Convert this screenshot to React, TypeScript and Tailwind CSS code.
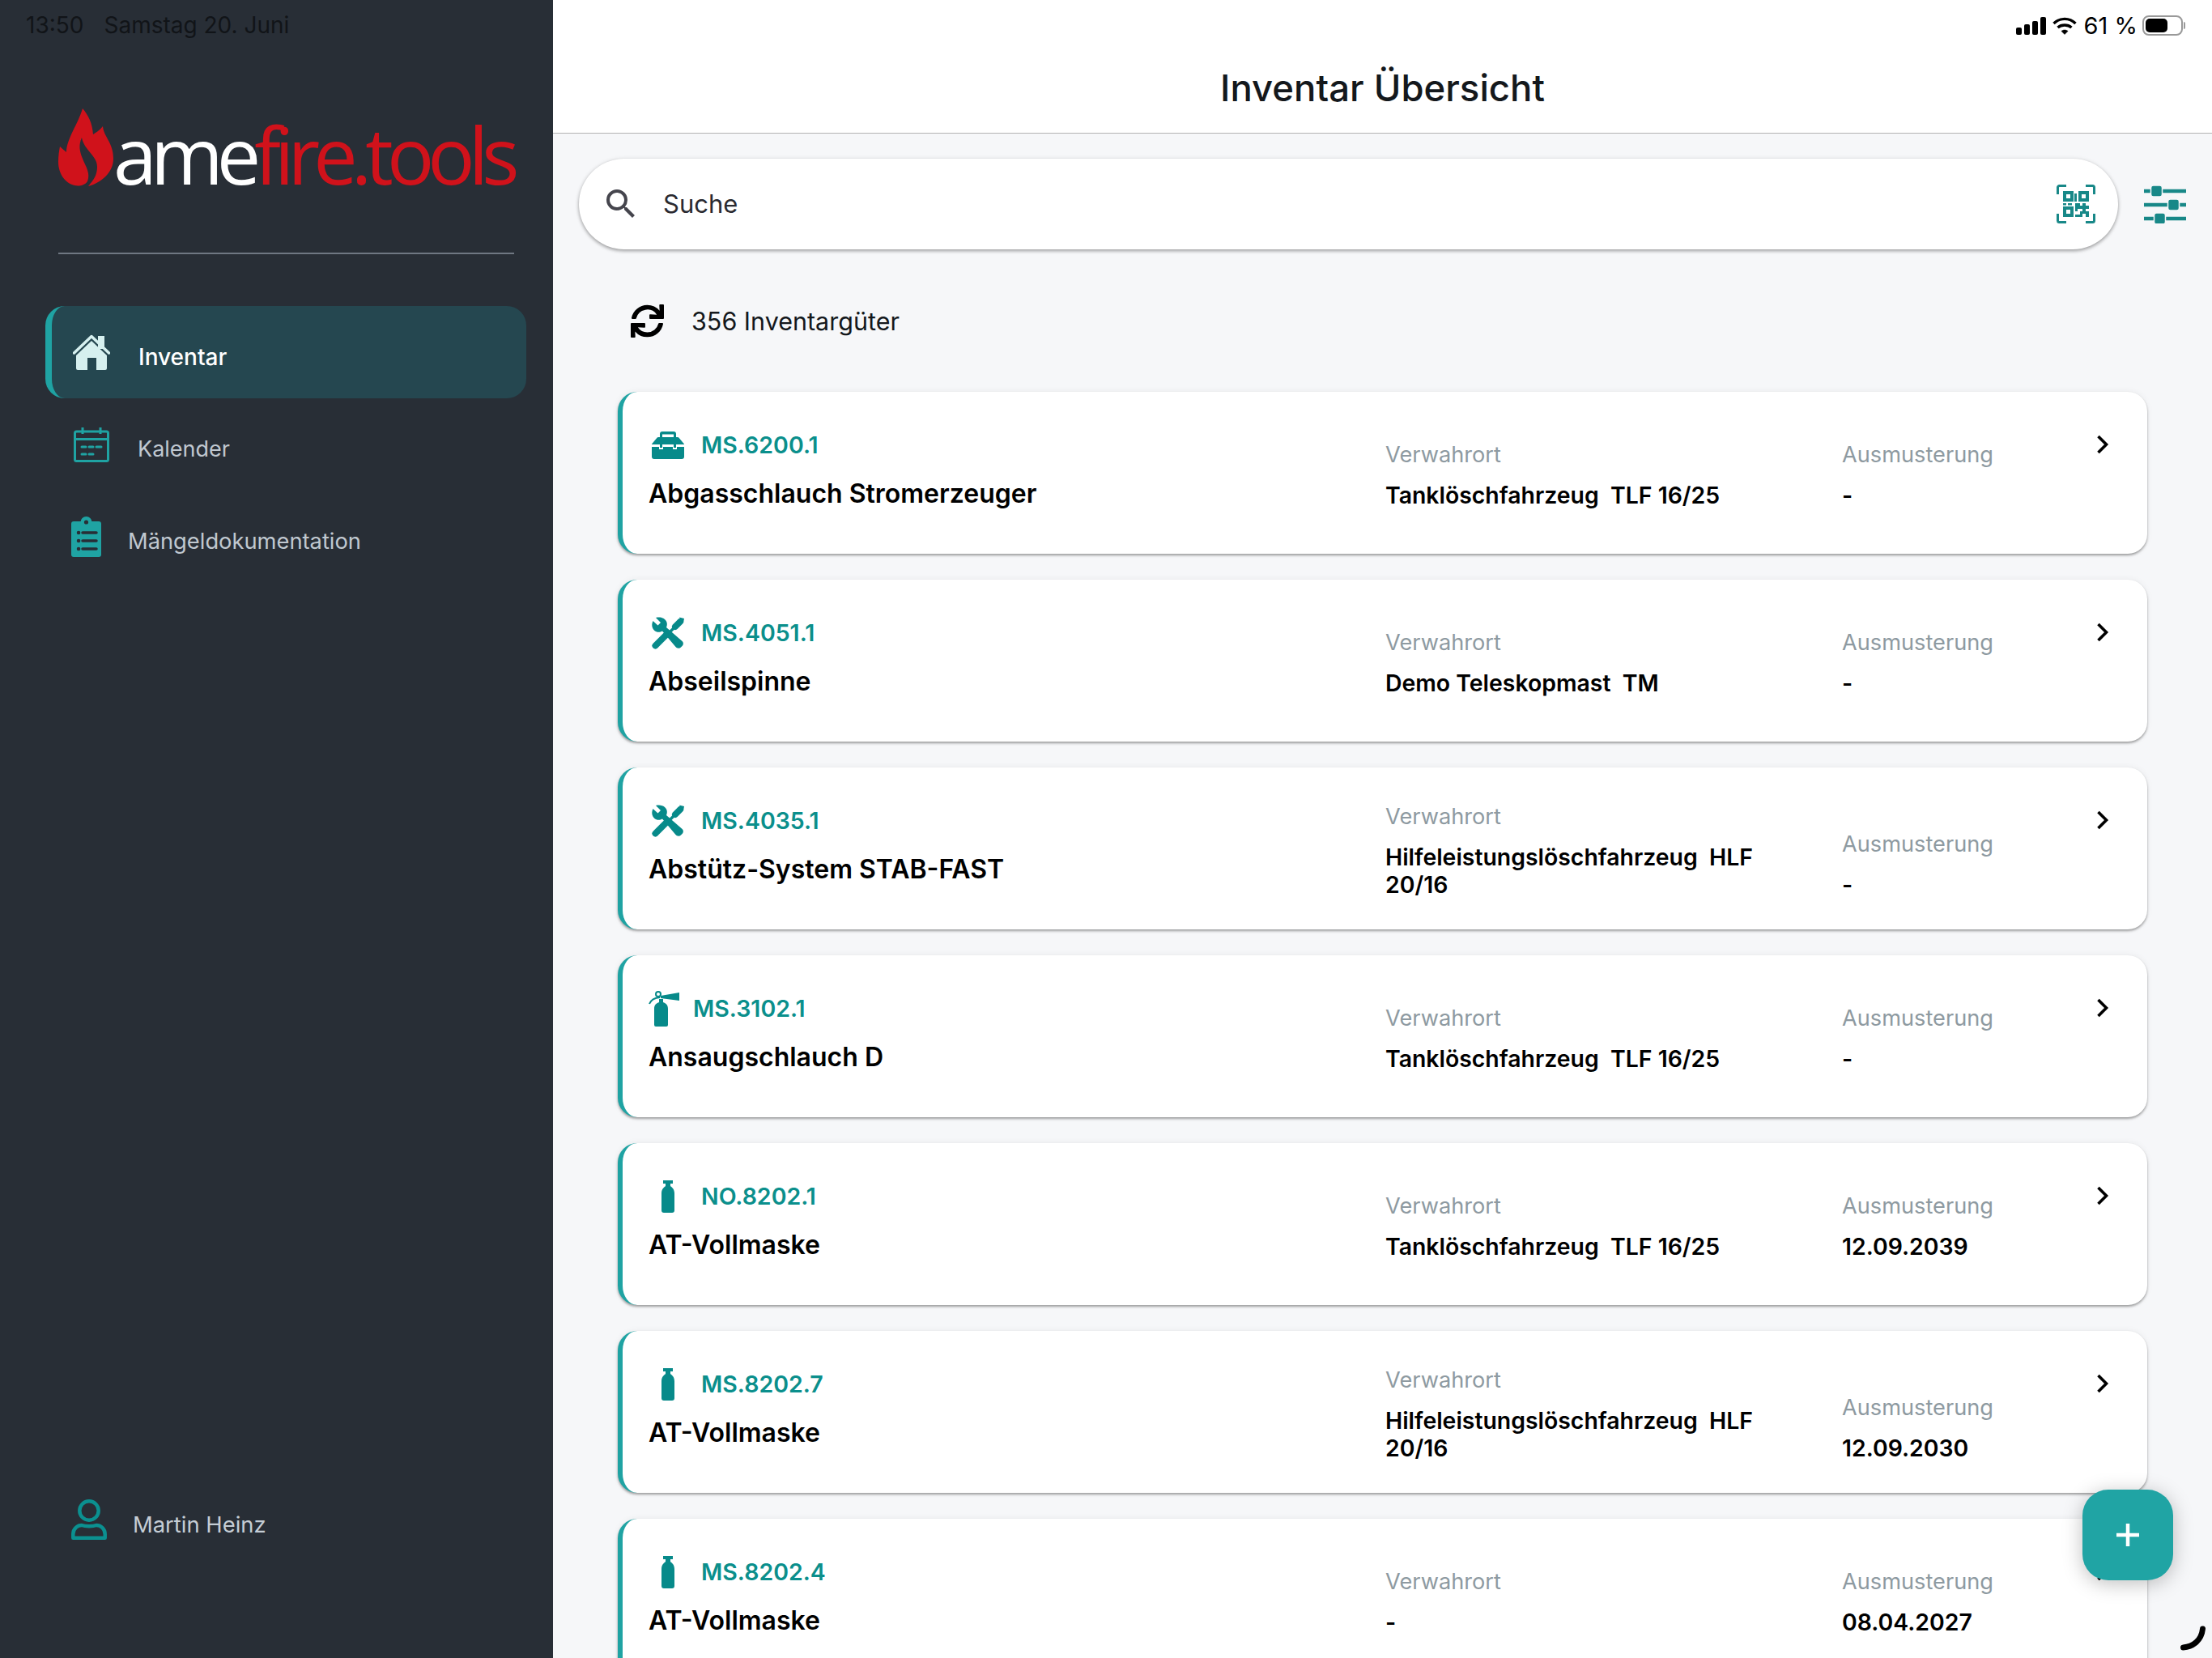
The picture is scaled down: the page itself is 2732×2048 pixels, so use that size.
import { FaSync } from "react-icons/fa";
import { MdSearch } from "react-icons/md";
import type { ReactNode } from "react";

const HomeIcon = () => (
  <svg width="46" height="44" viewBox="0 0 46 44" fill="#d6f0ef">
    <rect x="31" y="2" width="8" height="16" />
    <path d="M4 26 L23 8 L42 26 V42 a2 2 0 0 1-2 2 H29 V29 H18 V44 H6 a2 2 0 0 1-2-2Z" />
    <path d="M1.5 23 L23 2.5 L44.5 23" fill="none" stroke="#d6f0ef" strokeWidth="3.5" strokeLinejoin="round" strokeLinecap="round" />
  </svg>
);

const CalendarIcon = () => (
  <svg width="44" height="43" viewBox="0 0 44 43" fill="none" stroke="#1fa3a3">
    <rect x="1.5" y="5" width="41" height="36.5" rx="2" strokeWidth="3" />
    <path d="M2 14.5H42M11 0V8M33 0V8" strokeWidth="3" />
    <path d="M10 24H15M19 24H24M28 24H34M10 33H15M19 33H24" strokeWidth="3" strokeLinecap="round" />
  </svg>
);

const ClipboardIcon = () => (
  <svg width="37" height="50" viewBox="0 0 37 50">
    <circle cx="18.5" cy="7" r="7" fill="#1fa3a3" />
    <rect x="0" y="6" width="37" height="44" rx="3" fill="#1fa3a3" />
    <circle cx="18.5" cy="7" r="2.6" fill="#282e36" />
    <path d="M14 20H31M14 30H31M14 40H31" stroke="#282e36" strokeWidth="3.5" strokeLinecap="round" />
    <path d="M9 20h.1M9 30h.1M9 40h.1" stroke="#282e36" strokeWidth="4.5" strokeLinecap="round" />
  </svg>
);

const PersonIcon = () => (
  <svg width="44" height="50" viewBox="0 0 44 50" fill="none" stroke="#0b9090" strokeWidth="4.5" strokeLinejoin="round">
    <circle cx="22" cy="14" r="11.7" />
    <path d="M2.3 47.7 V43 C2.3 36 8 32 13 32 C17 33.5 27 33.5 31 32 C36 32 41.7 36 41.7 43 V47.7 Z" />
  </svg>
);

const Flame = () => (
  <svg width="68" height="96" viewBox="0 0 68 96" fill="#d0121b">
    <path d="M30 0 C37 8 42 18 43 32 C46 30 51 27 55 22 C56 35 68 42 68 62 C68 80 52 92 37 96 C44 88 48 82 48 72 C48 58 32 52 29 36 C25 45 26 52 30 62 C34 72 40 80 36 90 C32 96 24 96 20 95 C8 92 0 80 0 66 C0 58 1 52 2 47 C5 50 8 52 10 54 C10 38 24 20 30 0Z" />
  </svg>
);

const ToolboxIcon = () => (
  <svg width="40" height="34" viewBox="0 0 40 34" fill="#078a8a">
    <path fillRule="evenodd" d="M10 7V3a3 3 0 0 1 3-3h14a3 3 0 0 1 3 3v4h2a2 2 0 0 1 1.5.7L40 15.5V16H0v-.5L6.5 7.7A2 2 0 0 1 8 7ZM13 7h14V3.5H13Z" />
    <path d="M0 19h9v3h5v-3h12v3h5v-3h9v12a3 3 0 0 1-3 3H3a3 3 0 0 1-3-3Z" />
    <rect x="10" y="15" width="3" height="5" />
    <rect x="27" y="15" width="3" height="5" />
  </svg>
);

const ToolsIcon = () => (
  <svg width="40" height="40" viewBox="0 0 40 40" fill="#078a8a">
    <path d="M5 1 L11 7 L7.5 10.5 L1.5 5 C-1 10 0.5 15 4 17.5 C7 19.5 10.5 19 13 17.5 L29 36.5 C31 39 34 39.5 36 37.5 L38 35.5 C39.5 33.5 39 31 37 29.5 L18 13 C19.5 9.5 19 6 16.5 3.5 C13.5 0.5 9 0 5 1Z" />
    <path d="M4.5 35.5 L17 23" fill="none" stroke="#078a8a" strokeWidth="8" strokeLinecap="round" />
    <path d="M35 6 L29 12" fill="none" stroke="#078a8a" strokeWidth="8" strokeLinecap="round" />
    <path d="M29 12 L23 18" fill="none" stroke="#078a8a" strokeWidth="3.5" />
    <path d="M34 0.5 L40 2 L39 7.5 L36 4Z" />
  </svg>
);

const Extinguisher = () => (
  <svg width="38" height="44" viewBox="0 0 38 44" fill="#078a8a">
    <path d="M7 22 C7 17 10 15 13 14 V10 H18 V14 C21 15 24 17 24 22 V42 a2 2 0 0 1-2 2 H9 a2 2 0 0 1-2-2Z" />
    <path d="M15 6 L38 2 V12 L15 9Z" />
    <circle cx="12" cy="4" r="3" fill="none" stroke="#078a8a" strokeWidth="2" />
    <path d="M1 16 C3 11 7 8.5 14 8" fill="none" stroke="#078a8a" strokeWidth="2" />
  </svg>
);

const Bottle = () => (
  <svg width="16" height="40" viewBox="0 0 16 40" fill="#078a8a">
    <rect x="2" y="0" width="12" height="4" />
    <rect x="5" y="4" width="6" height="4" />
    <path d="M0 16 C0 10 4 8 5 7 H11 C12 8 16 10 16 16 V37 a3 3 0 0 1-3 3 H3 a3 3 0 0 1-3-3Z" />
  </svg>
);

const QrIcon = () => (
  <svg width="48" height="48" viewBox="0 0 48 48" fill="#188888">
    <path d="M1.5 12V3.5a2 2 0 0 1 2-2H12M36 1.5h8.5a2 2 0 0 1 2 2V12M1.5 36v8.5a2 2 0 0 0 2 2H12M46.5 36v8.5a2 2 0 0 1-2 2H36" fill="none" stroke="#188888" strokeWidth="3" />
    <path fillRule="evenodd" d="M8 8h13v13H8ZM12 12v5h5v-5Z" />
    <path fillRule="evenodd" d="M27 8h13v13H27ZM31 12v5h5v-5Z" />
    <path fillRule="evenodd" d="M8 27h13v13H8ZM12 31v5h5v-5Z" />
    <path d="M22 11h3v10h-3ZM8 23h4v2.5H8ZM14 23h5v2.5h-5ZM23 23h6v3h3v-3h4v3h4v4h-4v3h4v7h-4v-4h-4v4h-9v-3h6v-4h3v-3h-6v3h-3Z" />
  </svg>
);

const SlidersIcon = () => (
  <svg width="52" height="47" viewBox="0 0 52 47" fill="#188888" stroke="#f6f7f9" strokeWidth="1.5">
    <path d="M0 7H52M0 24H52M0 41H52" stroke="#188888" strokeWidth="4.5" />
    <rect x="8.5" y="0" width="14" height="14" rx="3" />
    <rect x="29.5" y="17" width="14" height="14" rx="3" />
    <rect x="12.5" y="34" width="14" height="14" rx="3" />
  </svg>
);

const SignalIcon = () => (
  <svg width="37" height="22" viewBox="0 0 37 22" fill="#000">
    <rect x="0" y="13" width="7" height="9" rx="2" />
    <rect x="10" y="9" width="7" height="13" rx="2" />
    <rect x="20" y="5" width="7" height="17" rx="2" />
    <rect x="30" y="0" width="7" height="22" rx="2" />
  </svg>
);

const WifiIcon = () => (
  <svg width="30" height="22" viewBox="0 0 30 22" fill="none" stroke="#000" strokeWidth="3.4">
    <path d="M1.5 8 C9 0.5 21 0.5 28.5 8" />
    <path d="M6.5 13 C11 9 19 9 23.5 13" />
    <path d="M11 17.5 L15 21.5 L19 17.5 C17 15.5 13 15.5 11 17.5Z" fill="#000" strokeWidth="0.5" />
  </svg>
);

type Row = {
  icon: ReactNode;
  iconBox: string;
  code: string;
  title: string;
  place: string;
  expiry: string;
};

const standardBox = "w-[46px] mr-[18px]";
const bottleRow = { icon: <Bottle />, iconBox: standardBox };

const rows: Row[] = [
  { icon: <ToolboxIcon />, iconBox: standardBox, code: "MS.6200.1", title: "Abgasschlauch Stromerzeuger", place: "Tanklöschfahrzeug  TLF 16/25", expiry: "-" },
  { icon: <ToolsIcon />, iconBox: standardBox, code: "MS.4051.1", title: "Abseilspinne", place: "Demo Teleskopmast  TM", expiry: "-" },
  { icon: <ToolsIcon />, iconBox: standardBox, code: "MS.4035.1", title: "Abstütz-System STAB-FAST", place: "Hilfeleistungslöschfahrzeug  HLF 20/16", expiry: "-" },
  { icon: <Extinguisher />, iconBox: "w-[38px] -ml-px mr-[17px]", code: "MS.3102.1", title: "Ansaugschlauch D", place: "Tanklöschfahrzeug  TLF 16/25", expiry: "-" },
  { ...bottleRow, code: "NO.8202.1", title: "AT-Vollmaske", place: "Tanklöschfahrzeug  TLF 16/25", expiry: "12.09.2039" },
  { ...bottleRow, code: "MS.8202.7", title: "AT-Vollmaske", place: "Hilfeleistungslöschfahrzeug  HLF 20/16", expiry: "12.09.2030" },
  { ...bottleRow, code: "MS.8202.4", title: "AT-Vollmaske", place: "-", expiry: "08.04.2027" },
];

const InventoryCard = ({ row }: { row: Row }) => (
  <div className="shrink-0 h-[200px] flex bg-white rounded-[24px] border-l-[6px] border-[#1fa3a3] pl-[33px] pr-[44px] shadow-[0_2px_3px_rgba(0,0,0,0.35),0_0_8px_rgba(0,0,0,0.06)]">
    <div className="w-[909px] shrink-0 pt-[42px]">
      <div className="h-[48px] flex items-center">
        <div className={`${row.iconBox} shrink-0 flex justify-center`}>{row.icon}</div>
        <span className="text-[28.5px] leading-[34px] font-semibold text-[#0b8f8c]">{row.code}</span>
      </div>
      <div className="-ml-px mt-[16px] text-[32px] leading-[40px] font-semibold text-black">{row.title}</div>
    </div>
    <div className="flex items-end self-center pt-[5px] flex-1">
      <div className="w-[564px] shrink-0 pr-[44px]">
        <div className="text-[27.2px] leading-[34px] text-[#8e9aa1] mb-[16px]">Verwahrort</div>
        <div className="text-[28.4px] leading-[34px] font-semibold text-black whitespace-pre-wrap">{row.place}</div>
      </div>
      <div>
        <div className="text-[27.2px] leading-[34px] text-[#8e9aa1] mb-[16px]">Ausmusterung</div>
        <div className="text-[28.4px] leading-[34px] font-semibold text-black">{row.expiry}</div>
      </div>
    </div>
    <div className="pt-[53px]">
      <svg width="24" height="24" viewBox="0 0 24 24" fill="none" stroke="#000" strokeWidth="3.6">
        <path d="M7.5 2 L17.5 12 L7.5 22" />
      </svg>
    </div>
  </div>
);

const App = () => {
  return (
    <div className="relative w-screen h-screen flex overflow-hidden font-[Inter,sans-serif]">
      {/* Sidebar */}
      <aside className="w-[683px] shrink-0 h-full bg-[#282e36] flex flex-col">
        <div className="pl-[32px] pt-[14px] h-[134px] text-[28px] leading-[34px] text-[#111418] flex gap-[25px]">
          <span>13:50</span>
          <span>Samstag 20. Juni</span>
        </div>
        <div className="pl-[72px] h-[96px] flex items-end">
          <Flame />
          <span className="-mb-[14px] text-[97px] leading-[108px] font-['Open_Sans',sans-serif] tracking-[-0.082em] text-white whitespace-nowrap">
            ame<span className="text-[#d0121b]">fire.tools</span>
          </span>
        </div>
        <div className="mt-[82px] ml-[72px] mr-[48px] h-[2px] bg-[#6f7782]" />
        <nav className="mt-[64px] ml-[56px] mr-[33px] flex flex-col">
          <div className="h-[114px] flex items-center pl-[26px] rounded-[24px] border-l-[8px] border-[#1fa3a3] bg-[#254750]">
            <div className="w-[46px] mr-[35px]"><HomeIcon /></div>
            <span className="mt-[12px] text-[28px] leading-[34px] font-medium text-white">Inventar</span>
          </div>
          <div className="h-[114px] flex items-center pl-[27px] border-l-[8px] border-transparent">
            <div className="w-[44px] mr-[35px]"><CalendarIcon /></div>
            <span className="mt-[12px] text-[27px] leading-[34px] text-[#c0c8d0]">Kalender</span>
          </div>
          <div className="h-[114px] flex items-center pl-[24px] border-l-[8px] border-transparent">
            <div className="w-[37px] mr-[33px]"><ClipboardIcon /></div>
            <span className="mt-[12px] text-[27.3px] leading-[34px] text-[#c0c8d0]">Mängeldokumentation</span>
          </div>
        </nav>
        <div className="mt-auto mb-[146px] pl-[88px] flex items-center">
          <PersonIcon />
          <span className="ml-[32px] mt-[12px] text-[27.4px] leading-[34px] text-[#c5cdd5]">Martin Heinz</span>
        </div>
      </aside>

      {/* Main */}
      <main className="flex-1 h-full bg-[#f6f7f9] flex flex-col">
        <header className="shrink-0 h-[165px] bg-white border-b border-[#b3b3b3] flex flex-col">
          <div className="h-[64px] pt-[19px] pr-[33px] flex justify-end items-start">
            <div className="mt-[2px]"><SignalIcon /></div>
            <div className="ml-[8px] mt-[2px]"><WifiIcon /></div>
            <span className="ml-[9px] text-[29px] leading-[26px] text-black">61 %</span>
            <div className="ml-[6px] w-[50px] h-[25px] border-2 border-[#999] rounded-[8px] p-[2px]">
              <div className="w-[27px] h-full bg-black rounded-[5px]" />
            </div>
            <div className="ml-[1px] mt-[8px] w-[2px] h-[9px] bg-[#999] rounded-r" />
          </div>
          <h1 className="text-center text-[45.5px] leading-[56px] font-medium text-[#14181c] mt-[17px]">Inventar Übersicht</h1>
        </header>

        <div className="shrink-0 mt-[31px] pl-[32px] pr-[32px] flex items-center">
          <div className="flex-1 h-[112px] bg-white rounded-full flex items-center pl-[28px] pr-[28px] shadow-[0_2px_4px_rgba(0,0,0,0.35),0_0_6px_rgba(0,0,0,0.06)]">
            <MdSearch className="w-[48px] h-[48px] text-[#45454d]" />
            <span className="ml-[28px] text-[31px] leading-[40px] text-[#2a2a30]">Suche</span>
            <div className="ml-auto"><QrIcon /></div>
          </div>
          <div className="ml-[32px]"><SlidersIcon /></div>
        </div>

        <div className="shrink-0 mt-[68px] pl-[96px] h-[41px] flex items-center">
          <FaSync className="w-[41px] h-[41px] text-black" />
          <span className="ml-[34px] text-[30.5px] leading-[40px] text-[#14181c]">356 Inventargüter</span>
        </div>

        <div className="mt-[67px] pl-[80px] pr-[80px] flex flex-col gap-[32px]">
          {rows.map((row) => (
            <InventoryCard key={row.code} row={row} />
          ))}
        </div>
      </main>

      {/* Add button */}
      <button className="absolute left-[2572px] top-[1840px] w-[112px] h-[112px] rounded-[32px] bg-[#20a4a4] flex items-center justify-center shadow-[0_4px_24px_rgba(0,0,0,0.25)]">
        <svg width="28" height="28" viewBox="0 0 28 28" stroke="#fff" strokeWidth="4.5">
          <path d="M14 0V28M0 14H28" />
        </svg>
      </button>

      {/* Loading arc at the screen corner */}
      <svg className="absolute left-[2693px] top-[2008px]" width="32" height="32" viewBox="0 0 32 32" fill="none" stroke="#000" strokeWidth="7" strokeLinecap="round">
        <path d="M3.5 27 C16 26 26 18 27.5 4" />
      </svg>
    </div>
  );
};

export default App;
